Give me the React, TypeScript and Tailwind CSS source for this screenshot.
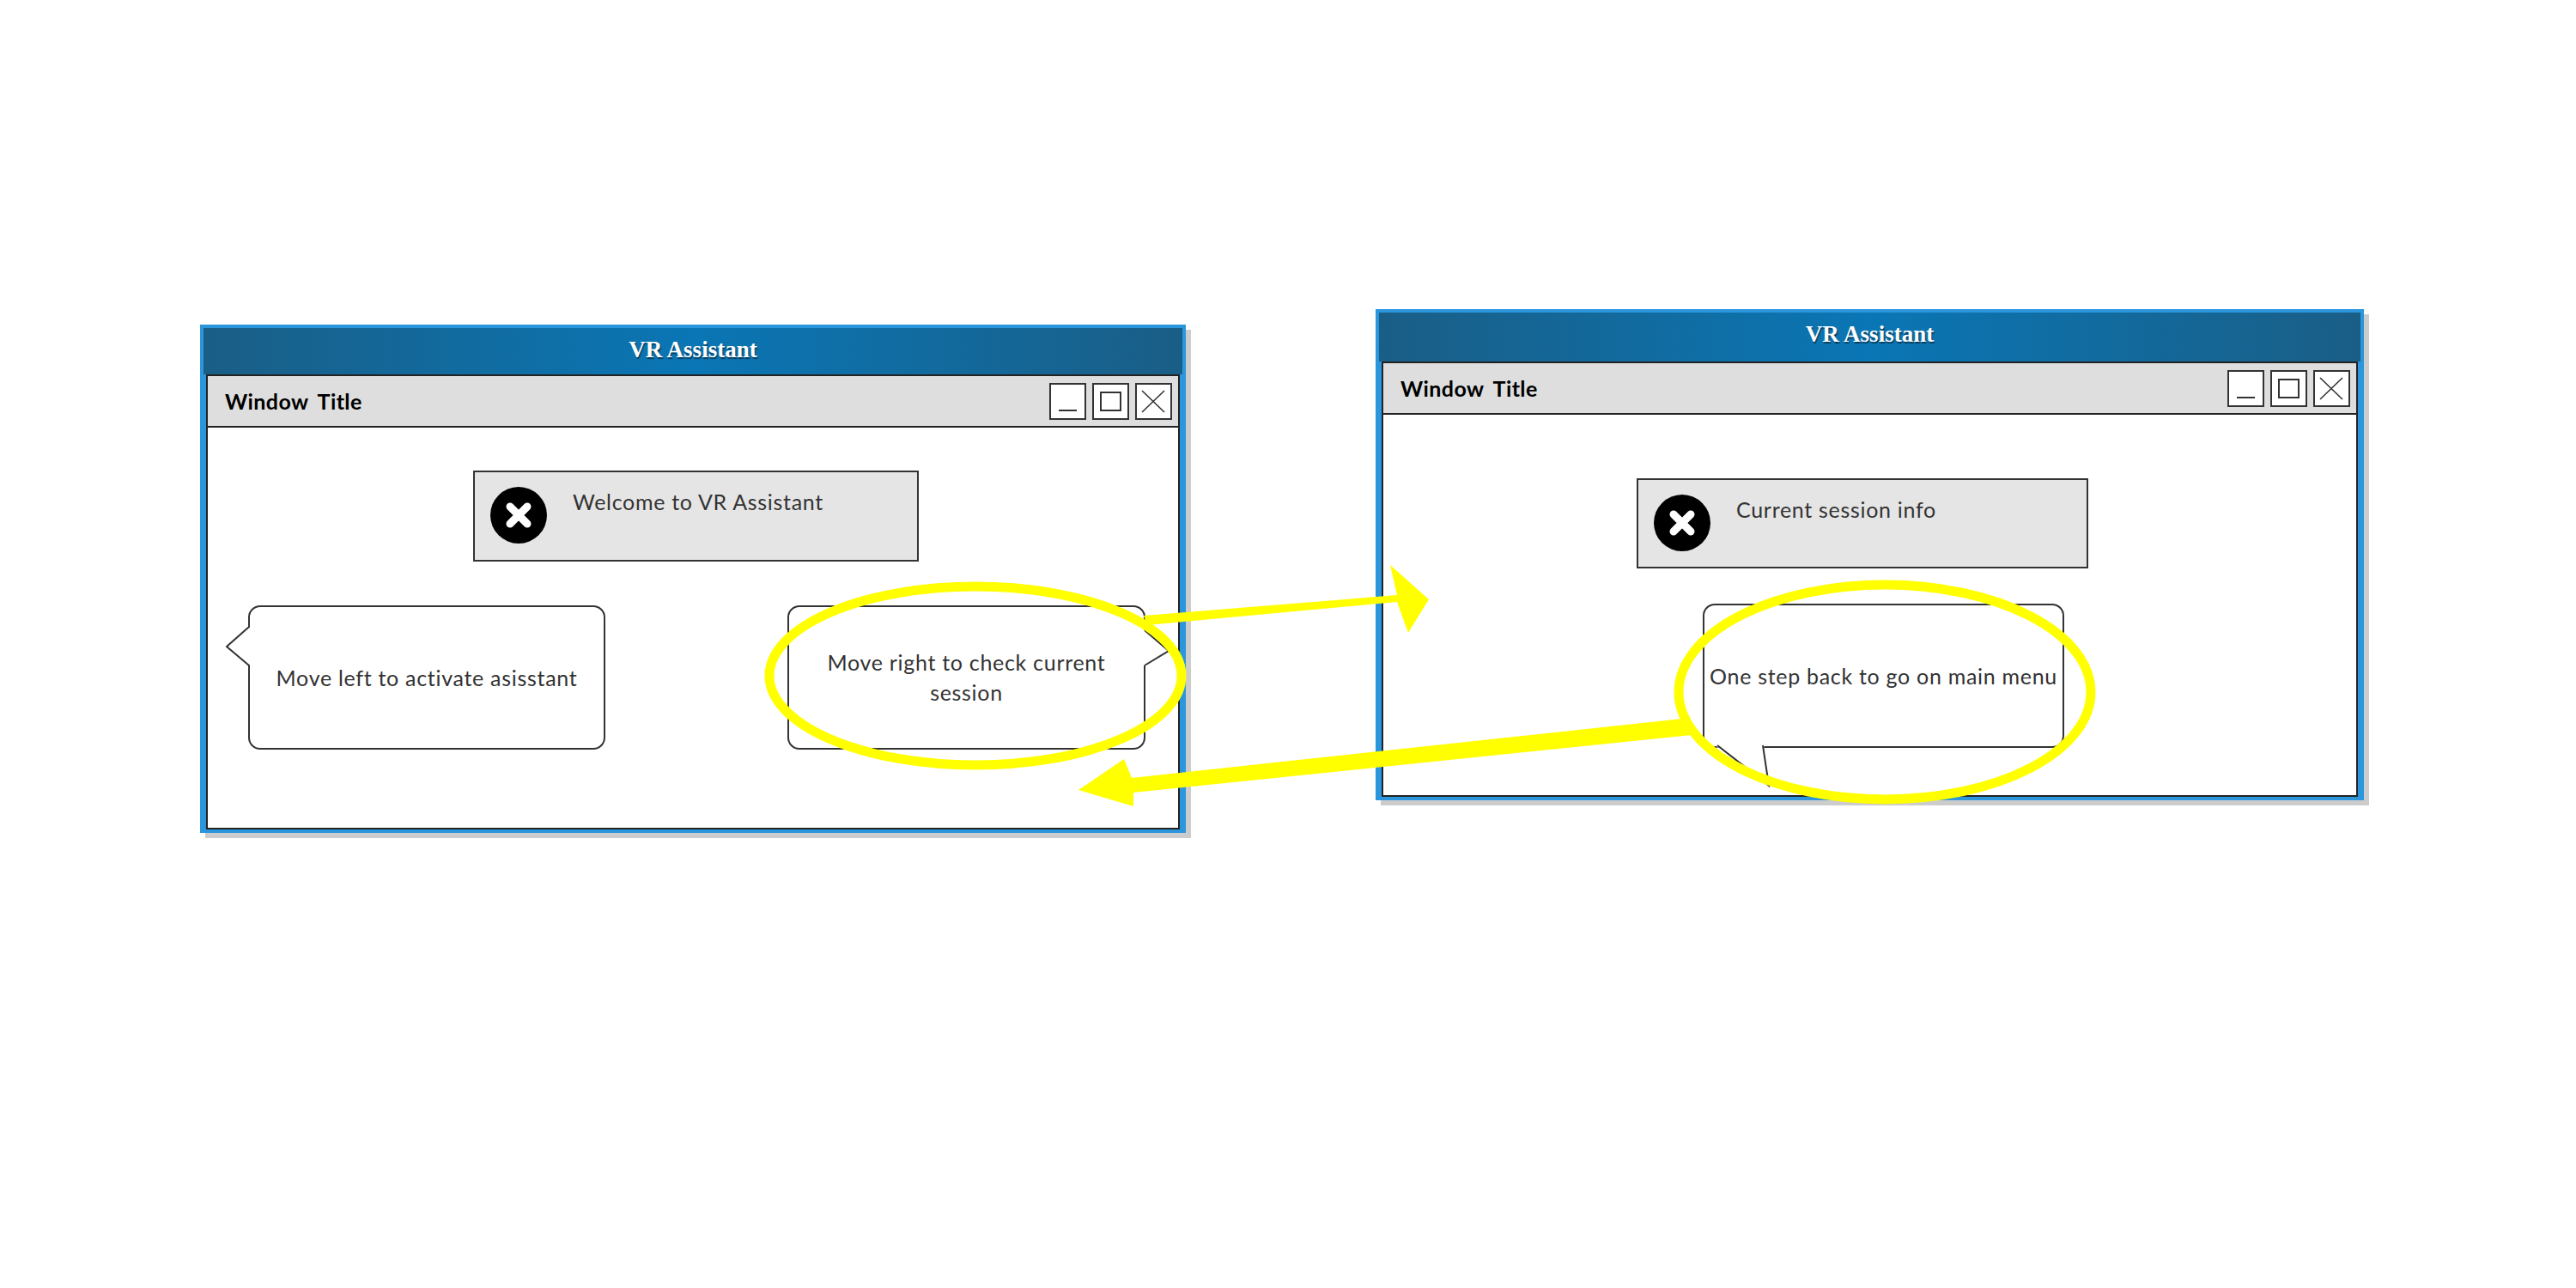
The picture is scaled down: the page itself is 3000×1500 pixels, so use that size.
import React from "react";

const sketchFont = "font-['Lato','Open_Sans',sans-serif]";

const WindowButtons = () => (
  <div className="flex gap-[7px] pr-[7px]">
    <button className="w-[43px] h-[43px] bg-white border-2 border-[#333]">
      <svg viewBox="0 0 39 39" className="w-full h-full" fill="none" stroke="#333" strokeWidth="2">
        <path d="M9 30h21" />
      </svg>
    </button>
    <button className="w-[43px] h-[43px] bg-white border-2 border-[#333]">
      <svg viewBox="0 0 39 39" className="w-full h-full" fill="none" stroke="#333" strokeWidth="2">
        <rect x="8" y="9" width="23" height="21" />
      </svg>
    </button>
    <button className="w-[43px] h-[43px] bg-white border-2 border-[#333]">
      <svg viewBox="0 0 39 39" className="w-full h-full" fill="none" stroke="#333" strokeWidth="1.6">
        <path d="M6 7l26 25M32 7L6 32" />
      </svg>
    </button>
  </div>
);

const ErrorIcon = () => (
  <svg viewBox="0 0 66 66" className="w-[66px] h-[66px] shrink-0">
    <circle cx="33" cy="33" r="33" fill="#000" />
    <path d="M23 23l20 20M43 23L23 43" stroke="#fff" strokeWidth="9" strokeLinecap="round" />
  </svg>
);

type WindowProps = {
  className: string;
  headClass: string;
  children: React.ReactNode;
};

const AppWindow = ({ className, headClass, children }: WindowProps) => (
  <div className={`absolute flex flex-col border-4 border-[#2b96dc] bg-[#2b96dc] shadow-[6px_6px_0_#cccccc] ${className}`}>
    <div className={`flex items-center justify-center bg-[linear-gradient(90deg,#1a5e86,#0a76b5_50%,#1a5e86)] font-['Liberation_Serif',serif] font-bold text-[27px] text-white [text-shadow:1px_2px_1px_#0b3b57] ${headClass}`}>
      VR Assistant
    </div>
    <div className="flex-1 flex flex-col mx-[3px] border-2 border-[#222] bg-white">
      <div className="h-[60px] shrink-0 flex items-center justify-between pl-[20px] bg-[#dedede] border-b-2 border-[#222]">
        <span className={`${sketchFont} font-bold text-[25px] tracking-[0.4px] [word-spacing:5px] text-black pt-[2px]`}>Window Title</span>
        <WindowButtons />
      </div>
      {children}
    </div>
  </div>
);

const Message = ({ className, text }: { className: string; text: string }) => (
  <div className={`flex items-start pl-[18px] pt-[17px] gap-[30px] bg-[#e5e5e5] border-2 border-[#333] ${className}`}>
    <ErrorIcon />
    <span className={`${sketchFont} text-[25px] leading-[32px] mt-[1px] tracking-[0.7px] text-[#333]`}>{text}</span>
  </div>
);

const bubbleBox = `relative flex items-center justify-center text-center rounded-[14px] border-2 border-[#333] bg-white text-[25px] leading-[35px] tracking-[0.7px] text-[#333] ${sketchFont}`;

export default function App() {
  return (
    <div className="relative w-[3000px] h-[1500px] bg-white overflow-hidden">
      {/* main menu */}
      <AppWindow className="left-[233px] top-[378px] w-[1148px] h-[592px]" headClass="h-[54px] pb-[4px]">
        <div className="flex-1 flex flex-col pt-[50px]">
          <Message className="ml-[309px] w-[519px] h-[106px]" text="Welcome to VR Assistant" />
          <div className="flex mt-[51px] ml-[47px] gap-[212px]">
            <div className={`${bubbleBox} w-[416px] h-[168px]`}>
              <svg viewBox="0 0 30 46" className="absolute left-[-28px] top-[23px] w-[30px] h-[46px]">
                <polygon points="26,1 1,23 26,44 30,44 30,1" fill="#fff" />
                <polyline points="27,0 1,23 27,45" fill="none" stroke="#333" strokeWidth="2" />
              </svg>
              Move left to activate asisstant
            </div>
            <div className={`${bubbleBox} w-[417px] h-[168px] px-[40px]`}>
              <svg viewBox="0 0 33 42" className="absolute right-[-31px] top-[27px] w-[33px] h-[42px]">
                <polygon points="0,0 4,0 31,24 4,41 0,41" fill="#fff" />
                <polyline points="3,0 31,24 3,41" fill="none" stroke="#333" strokeWidth="2" />
              </svg>
              Move right to check current session
            </div>
          </div>
        </div>
      </AppWindow>

      {/* session info */}
      <AppWindow className="left-[1602px] top-[360px] w-[1151px] h-[572px]" headClass="h-[57px] pb-[6px]">
        <div className="flex-1 flex flex-col pt-[74px]">
          <Message className="ml-[295px] w-[526px] h-[105px]" text="Current session info" />
          <div className={`${bubbleBox} mt-[41px] ml-[372px] w-[421px] h-[168px]`}>
            <svg viewBox="0 0 66 50" className="absolute left-[13px] top-full w-[66px] h-[50px] -mt-[2px]">
              <polygon points="3,0 55,0 55,2 62,48 3,2" fill="#fff" />
              <polygon points="3,0 55,0 55,2 3,2" fill="#fff" stroke="#fff" strokeWidth="3" />
              <polyline points="2,1 62,48 55,1" fill="none" stroke="#333" strokeWidth="2" />
            </svg>
            One step back to go on main menu
          </div>
        </div>
      </AppWindow>

      {/* yellow annotations */}
      <svg viewBox="0 0 3000 1500" className="absolute inset-0 w-[3000px] h-[1500px] pointer-events-none">
        <g fill="none" stroke="#ffff00" strokeWidth="11">
          <ellipse cx="1136" cy="787" rx="240" ry="104" />
          <ellipse cx="2195" cy="806" rx="240" ry="125" />
        </g>
        <polygon fill="#ffff00" points="1332,717 1627,693 1619,658 1664,698 1640,737 1627,701 1336,728" />
        <polygon fill="#ffff00" points="1256,920 1309,884 1318,906 1959,837 1970,856 1320,923 1320,939" />
      </svg>
    </div>
  );
}
